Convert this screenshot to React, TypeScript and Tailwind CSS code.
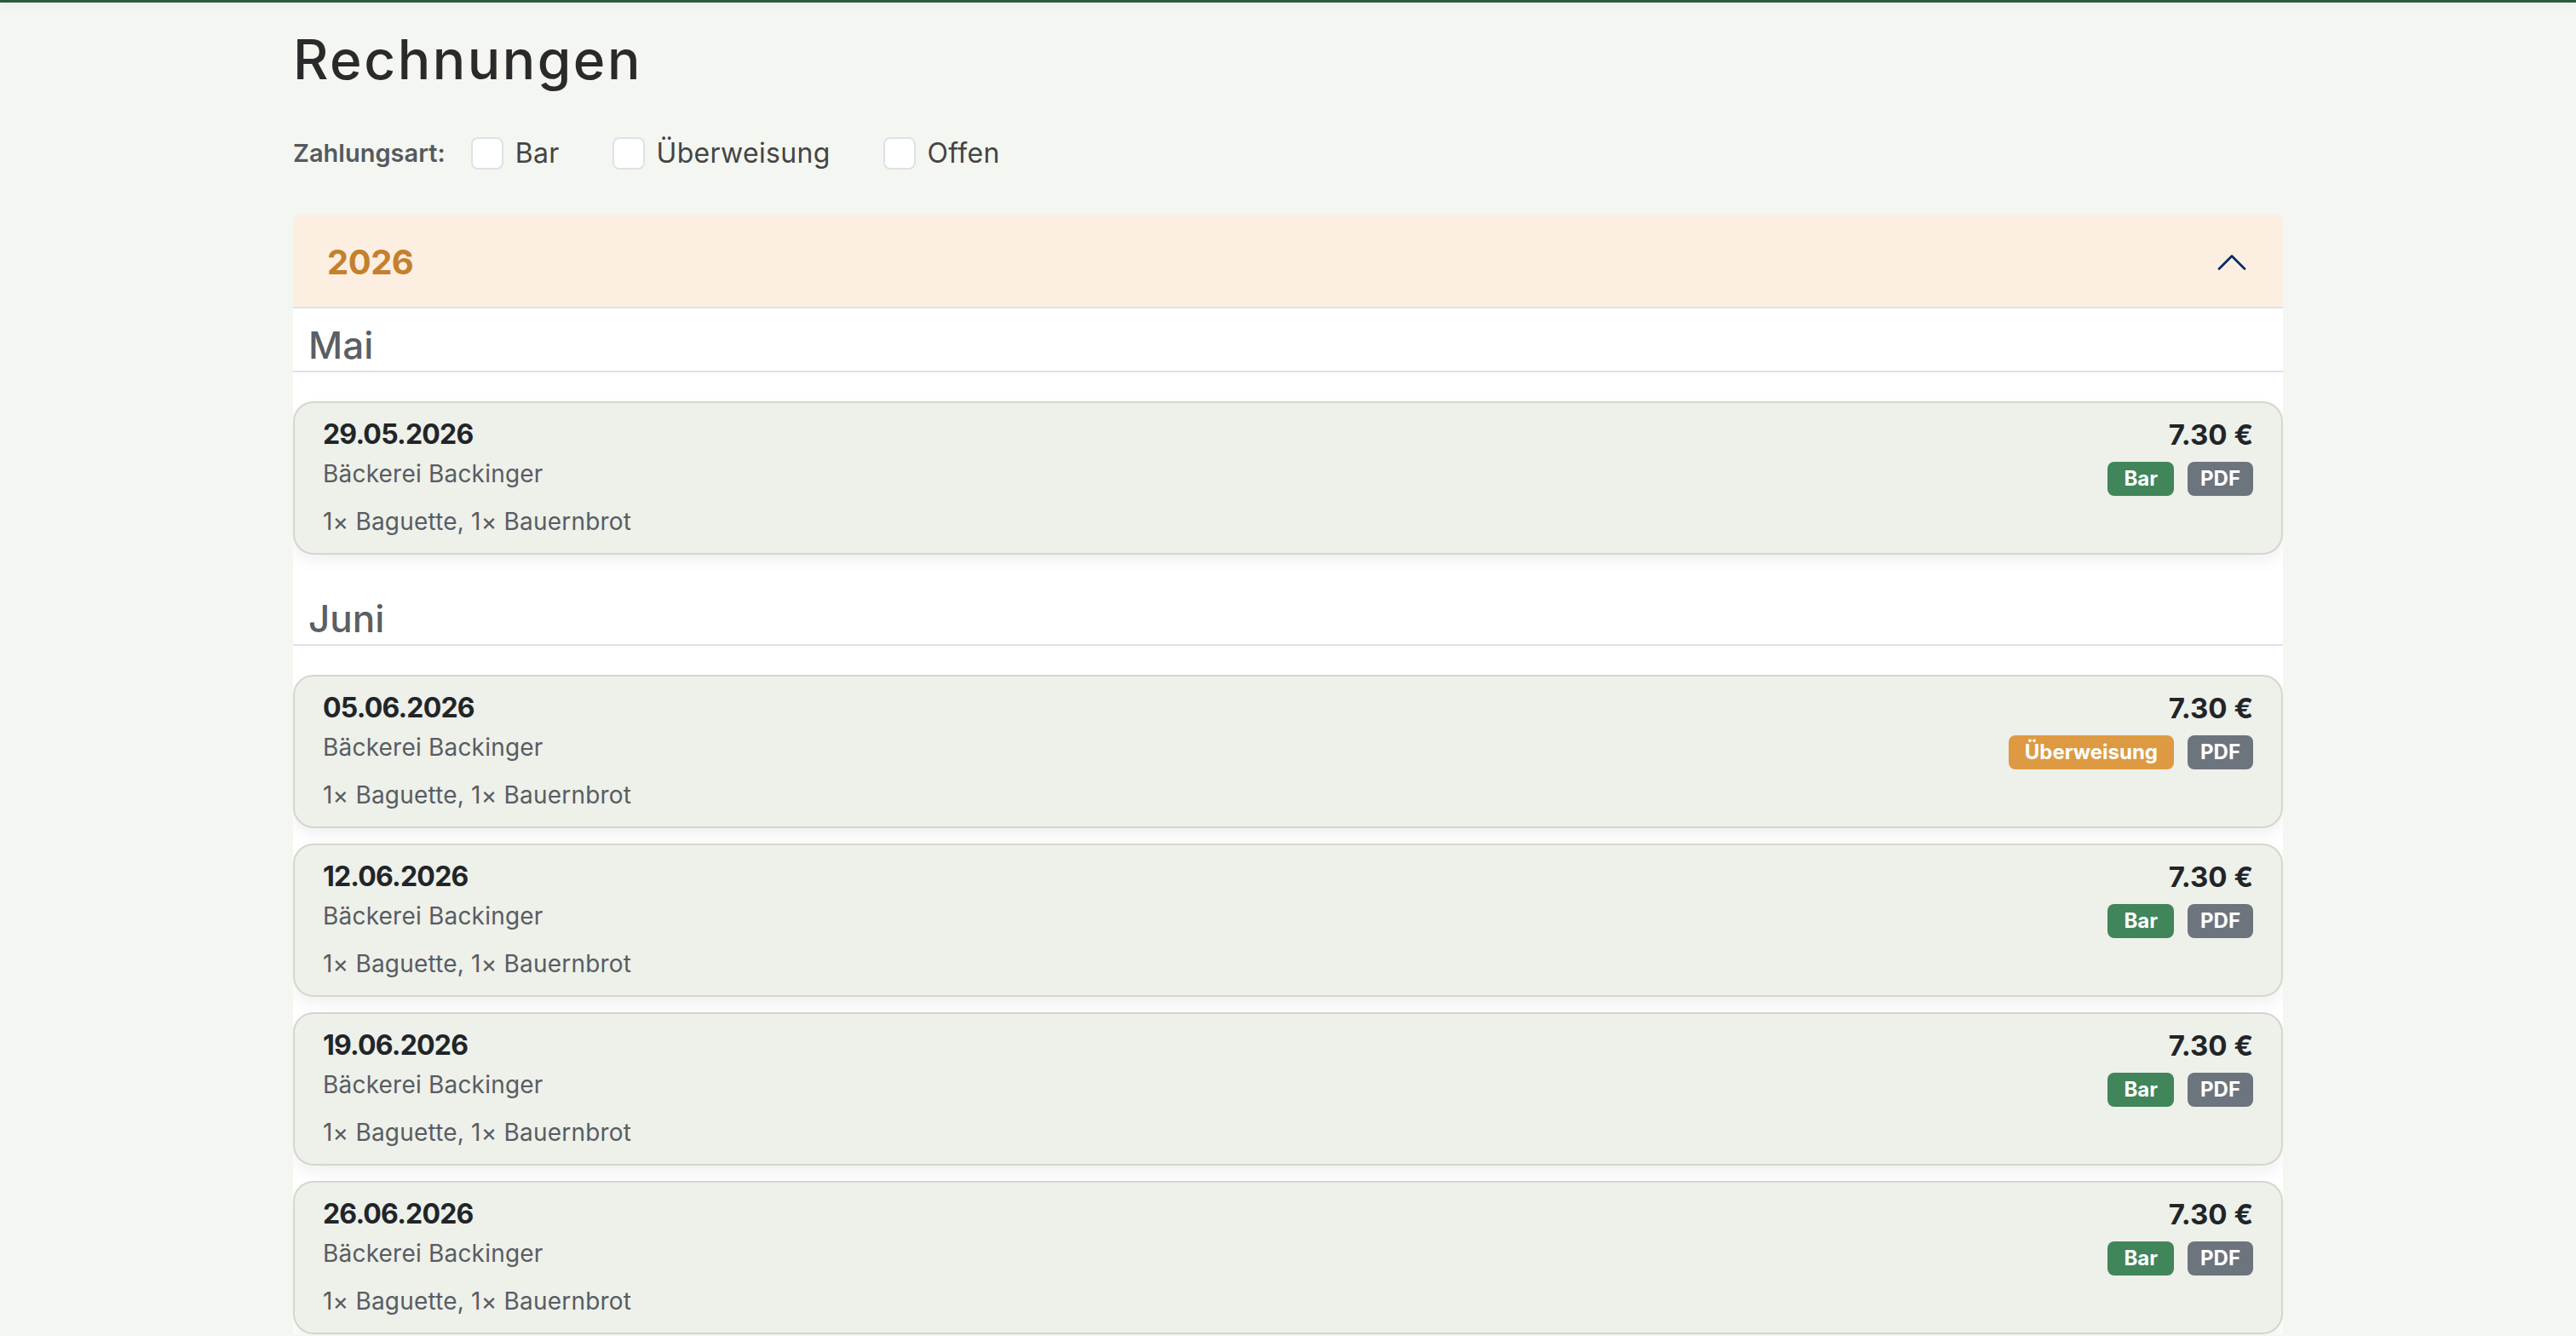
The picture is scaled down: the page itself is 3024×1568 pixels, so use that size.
import React from "react";

type Rechnung = {
  id: number;
  datum: string;
  shop: string;
  artikel: string;
  betrag: string;
  zahlung: "Bar" | "Überweisung";
};

const monate: { name: string; rechnungen: Rechnung[] }[] = [
  {
    name: "Mai",
    rechnungen: [
      { id: 1, datum: "29.05.2026", shop: "Bäckerei Backinger", artikel: "1× Baguette, 1× Bauernbrot", betrag: "7.30 €", zahlung: "Bar" },
    ],
  },
  {
    name: "Juni",
    rechnungen: [
      { id: 2, datum: "05.06.2026", shop: "Bäckerei Backinger", artikel: "1× Baguette, 1× Bauernbrot", betrag: "7.30 €", zahlung: "Überweisung" },
      { id: 3, datum: "12.06.2026", shop: "Bäckerei Backinger", artikel: "1× Baguette, 1× Bauernbrot", betrag: "7.30 €", zahlung: "Bar" },
      { id: 4, datum: "19.06.2026", shop: "Bäckerei Backinger", artikel: "1× Baguette, 1× Bauernbrot", betrag: "7.30 €", zahlung: "Bar" },
      { id: 5, datum: "26.06.2026", shop: "Bäckerei Backinger", artikel: "1× Baguette, 1× Bauernbrot", betrag: "7.30 €", zahlung: "Bar" },
    ],
  },
];

const Checkbox: React.FC<{ label: string }> = ({ label }) => (
  <label className="flex items-center gap-[14px] cursor-pointer">
    <span className="h-[38px] w-[38px] rounded-[8px] border-2 border-[#dee2e6] bg-white" />
    <span className="text-[32px] leading-[38px] tracking-[0.3px] text-[#444444]">{label}</span>
  </label>
);

const RechnungCard: React.FC<{ r: Rechnung }> = ({ r }) => (
  <div className="flex justify-between rounded-[24px] border-2 border-[#d4d6cf] bg-[#eef0ea] px-[33px] pt-[15px] pb-[13px] shadow-[0_8px_18px_rgba(0,0,0,0.06)]">
    <div>
      <div className="text-[32px] leading-[44px] font-bold tracking-[-0.8px] text-[#212529]">{r.datum}</div>
      <div className="text-[28px] leading-[48px] tracking-[0.2px] text-[#585d62]">{r.shop}</div>
      <div className="mt-[8px] text-[28px] leading-[48px] tracking-[0.2px] text-[#585d62]">{r.artikel}</div>
    </div>
    <div className="flex flex-col items-end">
      <div className="text-[33px] leading-[44px] font-bold text-[#212529]">{r.betrag}</div>
      <div className="mt-[10px] flex gap-[16px]">
        {r.zahlung === "Bar" ? (
          <span className="inline-flex h-[40px] items-center rounded-[8px] bg-[#41855a] px-[19px] text-[24px] font-bold text-white">Bar</span>
        ) : (
          <span className="inline-flex h-[40px] items-center rounded-[8px] bg-[#dd9a42] px-[19px] text-[24px] font-bold text-white">Überweisung</span>
        )}
        <span className="inline-flex h-[40px] items-center rounded-[8px] bg-[#6c757d] px-[15px] text-[24px] font-bold text-white">PDF</span>
      </div>
    </div>
  </div>
);

export default function App() {
  return (
    <div className="min-h-screen bg-[#f4f6f1] font-['Inter','Noto_Sans',sans-serif]">
      {/* Navbar-Kante */}
      <div className="h-[3px] bg-[#2c5a3d] shadow-[0_3px_12px_rgba(0,0,0,0.09)]" />

      <main className="mx-auto max-w-[2400px] px-[32px] pb-[40px]">
        <h1 className="mt-[28px] text-[64px] leading-[77px] font-medium tracking-[2.5px] text-[#2a2a2a]">Rechnungen</h1>

        {/* Filter */}
        <div className="mt-[53px] flex items-center">
          <span className="mr-[30px] text-[29px] leading-[38px] font-semibold text-[#55595e]">Zahlungsart:</span>
          <div className="flex items-center gap-[62px]">
            <Checkbox label="Bar" />
            <Checkbox label="Überweisung" />
            <Checkbox label="Offen" />
          </div>
        </div>

        {/* Jahr */}
        <section className="mt-[53px] overflow-hidden rounded-t-[8px]">
          <button className="flex h-[110px] w-full items-center justify-between border-b-2 border-[#dee2e6] bg-[#fcefe1] px-[40px] pt-[4px]">
            <span className="text-[40px] font-bold tracking-[-0.5px] text-[#c4802f]">2026</span>
            <svg width="40" height="40" viewBox="0 0 16 16" fill="none" stroke="#052c65" strokeWidth="1.1" strokeLinecap="round" strokeLinejoin="round">
              <path d="M2 11L8 5L14 11" />
            </svg>
          </button>

          <div className="bg-white">
            {monate.map((m, i) => (
              <div key={m.name} className={i > 0 ? "mt-[32px]" : ""}>
                <h4 className="border-b-2 border-[#dee2e6] px-[18px] pt-[17px] pb-[3px] text-[44px] leading-[53px] font-medium text-[#5a5f64]">
                  {m.name}
                </h4>
                <div className="mt-[34px] flex flex-col gap-[18px]">
                  {m.rechnungen.map((r) => (
                    <RechnungCard key={r.id} r={r} />
                  ))}
                </div>
              </div>
            ))}
          </div>
        </section>
      </main>
    </div>
  );
}
